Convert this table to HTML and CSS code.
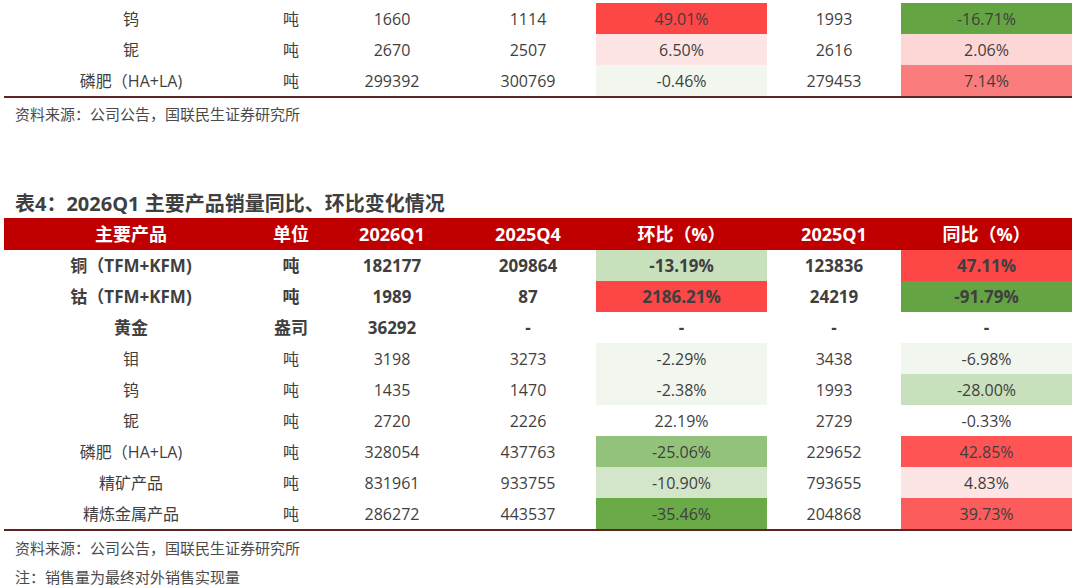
FILE: index.html
```html
<!DOCTYPE html>
<html lang="zh-CN">
<head>
<meta charset="utf-8">
<title>表4</title>
<link rel="stylesheet" href="styles.css">
</head>
<body>
<div class="page">
  <table class="data top">
    <colgroup>
      <col class="c1"><col class="c2"><col class="c3"><col class="c4"><col class="c5"><col class="c6"><col class="c7">
    </colgroup>
    <tbody>
      <tr><td>钨</td><td>吨</td><td>1660</td><td>1114</td><td class="r1">49.01%</td><td>1993</td><td class="g1">-16.71%</td></tr>
      <tr><td>铌</td><td>吨</td><td>2670</td><td>2507</td><td class="p5">6.50%</td><td>2616</td><td class="p4">2.06%</td></tr>
      <tr><td>磷肥（HA+LA)</td><td>吨</td><td>299392</td><td>300769</td><td class="g6">-0.46%</td><td>279453</td><td class="r3">7.14%</td></tr>
    </tbody>
  </table>
  <p class="note first">资料来源：公司公告，国联民生证券研究所</p>

  <h2 class="title">表4：2026Q1 主要产品销量同比、环比变化情况</h2>
  <table class="data">
    <colgroup>
      <col class="c1"><col class="c2"><col class="c3"><col class="c4"><col class="c5"><col class="c6"><col class="c7">
    </colgroup>
    <thead>
      <tr><th>主要产品</th><th>单位</th><th>2026Q1</th><th>2025Q4</th><th>环比（%）</th><th>2025Q1</th><th>同比（%）</th></tr>
    </thead>
    <tbody>
      <tr class="bold"><td>铜（TFM+KFM)</td><td>吨</td><td>182177</td><td>209864</td><td class="g4">-13.19%</td><td>123836</td><td class="r1">47.11%</td></tr>
      <tr class="bold"><td>钴（TFM+KFM)</td><td>吨</td><td>1989</td><td>87</td><td class="r1">2186.21%</td><td>24219</td><td class="g1">-91.79%</td></tr>
      <tr class="bold"><td>黄金</td><td>盎司</td><td>36292</td><td>-</td><td>-</td><td>-</td><td>-</td></tr>
      <tr><td>钼</td><td>吨</td><td>3198</td><td>3273</td><td class="g6">-2.29%</td><td>3438</td><td class="g6">-6.98%</td></tr>
      <tr><td>钨</td><td>吨</td><td>1435</td><td>1470</td><td class="g6">-2.38%</td><td>1993</td><td class="g4">-28.00%</td></tr>
      <tr><td>铌</td><td>吨</td><td>2720</td><td>2226</td><td>22.19%</td><td>2729</td><td>-0.33%</td></tr>
      <tr><td>磷肥（HA+LA)</td><td>吨</td><td>328054</td><td>437763</td><td class="g3">-25.06%</td><td>229652</td><td class="r2">42.85%</td></tr>
      <tr><td>精矿产品</td><td>吨</td><td>831961</td><td>933755</td><td class="g5">-10.90%</td><td>793655</td><td class="p5">4.83%</td></tr>
      <tr><td>精炼金属产品</td><td>吨</td><td>286272</td><td>443537</td><td class="g2">-35.46%</td><td>204868</td><td class="r2b">39.73%</td></tr>
    </tbody>
  </table>
  <p class="note after">资料来源：公司公告，国联民生证券研究所</p>
  <p class="note last">注：销售量为最终对外销售实现量</p>
</div>
</body>
</html>
```
FILE: styles.css
```css
html, body {
  margin: 0;
  padding: 0;
  background: #ffffff;
}

body {
  font-family: "Open Sans", "Noto Sans CJK SC", sans-serif;
  color: #3f3f3f;
}

.page {
  width: 1074px;
  height: 588px;
  overflow: hidden;
  padding-top: 3px;
  box-sizing: border-box;
}

.data {
  margin-left: 4px;
  width: 1068px;
  border-collapse: collapse;
  table-layout: fixed;
  border-bottom: 2px solid #5e2424;
}

.c1 { width: 254px; }
.c2 { width: 66px; }
.c3 { width: 136px; }
.c4 { width: 136px; }
.c5 { width: 171px; }
.c6 { width: 134px; }
.c7 { width: 171px; }

.data td,
.data th {
  padding: 0;
  height: 31px;
  text-align: center;
  vertical-align: middle;
  white-space: nowrap;
  font-size: 16px;
  line-height: 20px;
}

.data thead th {
  background: #c00000;
  color: #ffffff;
  font-weight: 700;
  font-size: 18px;
  height: 32px;
}

.data tr.bold td {
  font-weight: 700;
  font-size: 17px;
}

.r1 { background: #fd4646; }
.r2 { background: #fe5454; }
.r2b { background: #fd5c5c; }
.r3 { background: #fb7c7c; }
.p4 { background: #fdd6d6; }
.p5 { background: #fde5e5; }
.g1 { background: #64a443; }
.g2 { background: #6aab48; }
.g3 { background: #93c37a; }
.g4 { background: #c8e0bb; }
.g5 { background: #d3e6c9; }
.g6 { background: #f1f7ee; }

.note {
  margin: 0;
  padding-left: 15px;
  font-size: 15px;
  line-height: 30px;
  color: #4a4a4a;
}

.note.first {
  margin-top: 1px;
}

.note.after {
  margin-top: 2px;
}

.note.last {
  margin-top: 4px;
  line-height: 20px;
}

.title {
  margin: 62px 0 0 0;
  padding-left: 15px;
  font-size: 20px;
  line-height: 26px;
  font-weight: 700;
  color: #3f3f3f;
  height: 27px;
}
```
